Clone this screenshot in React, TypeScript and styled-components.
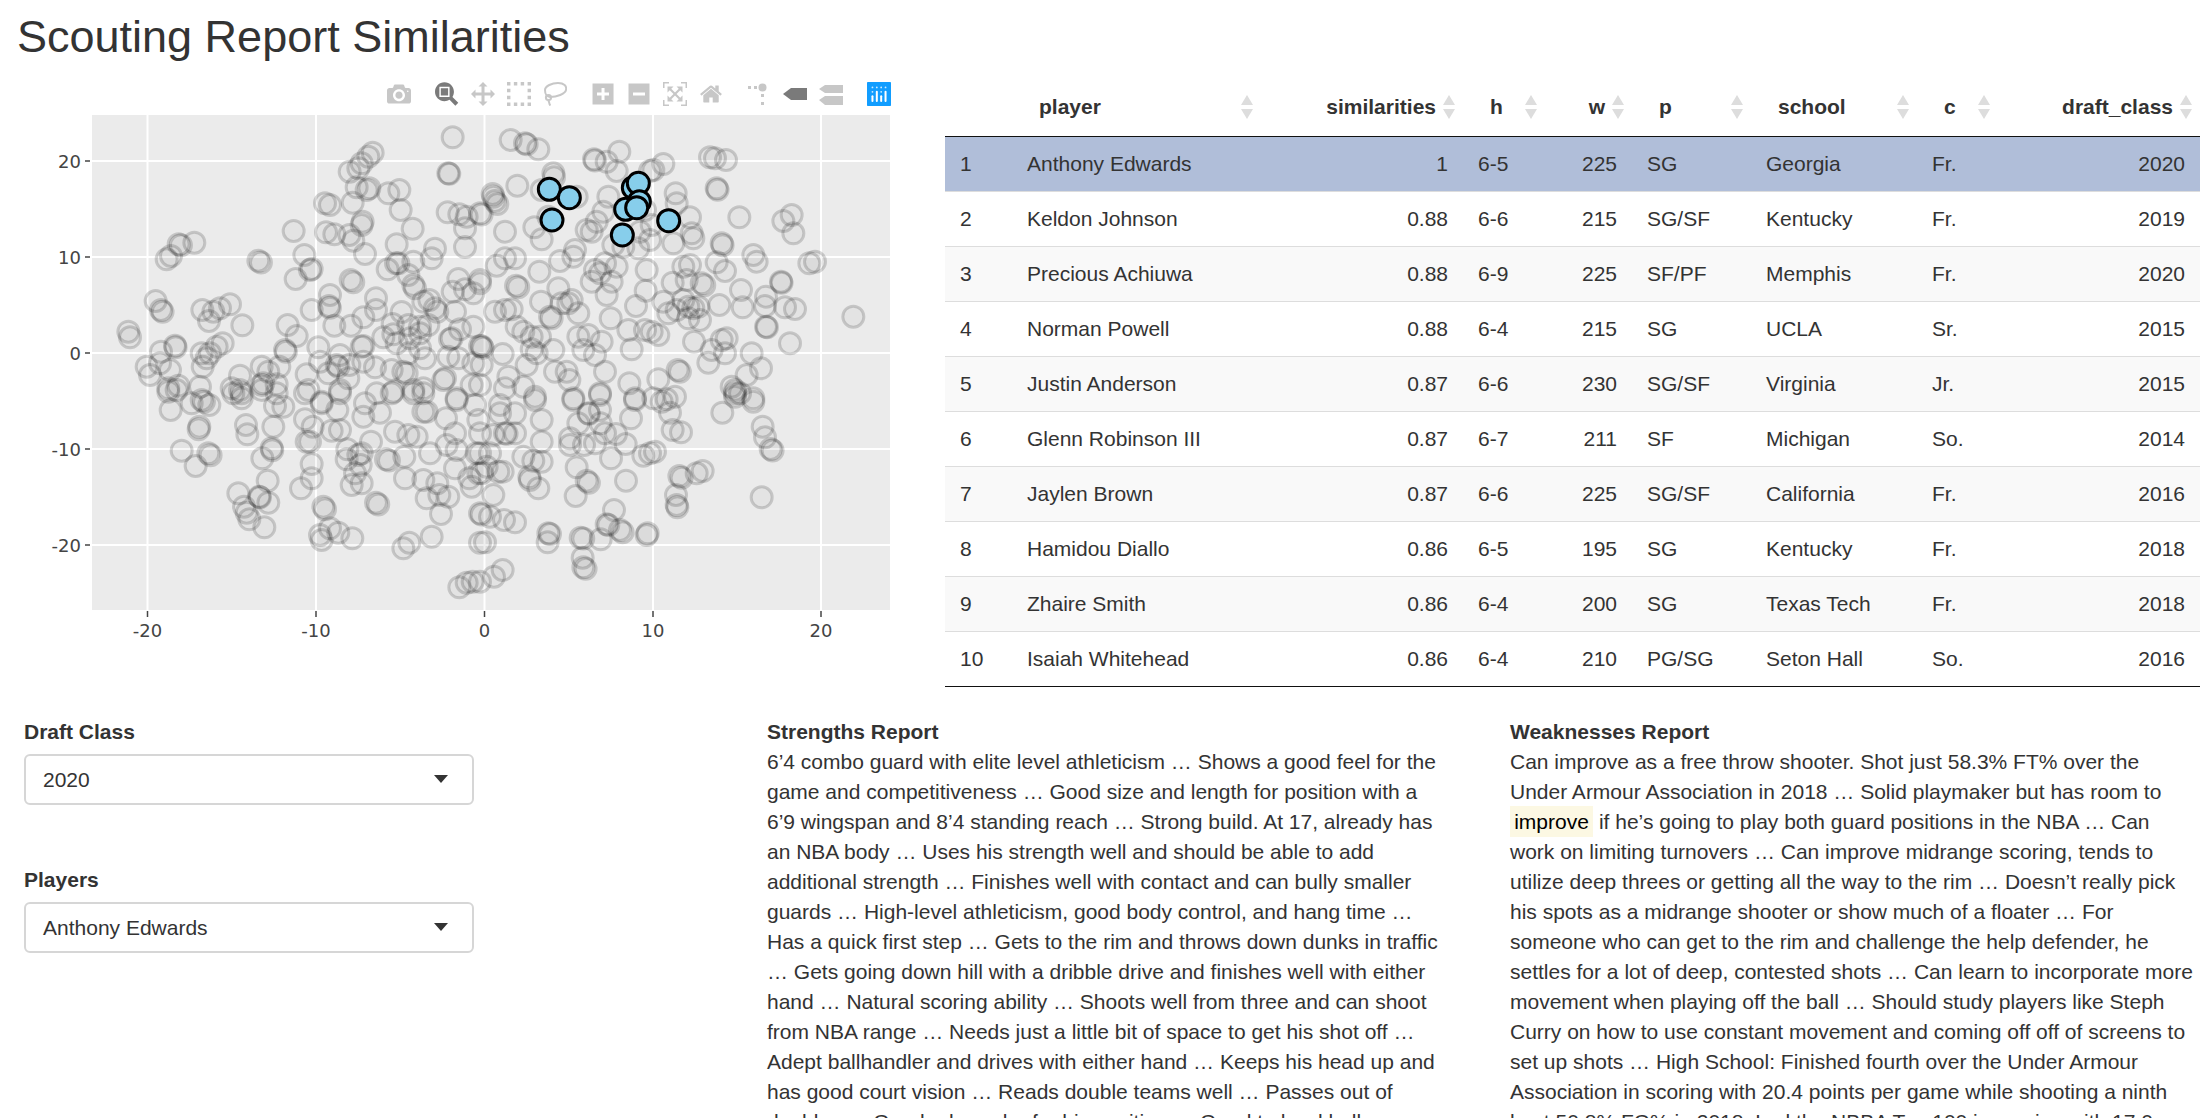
import styled, { createGlobalStyle } from "styled-components";

const GlobalStyle = createGlobalStyle`
  html, body {
    margin: 0;
    height: 100%;
    overflow: hidden;
    background: #fff;
  }
  body {
    font-family: "Liberation Sans", Arial, sans-serif;
    font-size: 21px;
    line-height: 30px;
    color: #333;
  }
`;

const Page = styled.div`
  width: 2200px;
  height: 1118px;
  overflow: hidden;
`;
const Title = styled.h2`
  margin: 0;
  height: 60px;
  padding: 12px 0 0 17px;
  box-sizing: border-box;
  font-size: 45px;
  line-height: 50px;
  font-weight: 500;
`;
const TopRow = styled.div`
  display: grid;
  grid-template-columns: 945px 1255px;
  height: 640px;
`;
const ChartPanel = styled.div`
  position: relative;
  height: 640px;
`;
const ModeBar = styled.div`
  position: absolute;
  top: 22px;
  right: 54px;
  display: flex;
  gap: 24px;
`;
const ModeGroup = styled.div`
  display: flex;
  gap: 12px;
`;
const ModeIcon = styled.svg`
  width: 24px;
  height: 24px;
  display: block;
`;
const TableWrap = styled.div`
  padding-top: 16px;
`;
const Table = styled.table`
  width: 1255px;
  table-layout: fixed;
  border-collapse: separate;
  border-spacing: 0;
  border-bottom: 1px solid #111;
  font-size: 21px;
  color: #333;
`;
const Th = styled.th<{ $right?: boolean }>`
  position: relative;
  padding: 16px 27px 14px;
  line-height: 30px;
  font-weight: 700;
  text-align: ${(p) => (p.$right ? "right" : "left")};
  border-bottom: 1px solid #111;
`;
const SortIcon = styled.svg`
  position: absolute;
  right: 8px;
  top: 19px;
  width: 12px;
  height: 24px;
`;
const Row = styled.tr<{ $selected?: boolean; $striped?: boolean }>`
  background: ${(p) => (p.$selected ? "#b0bed9" : p.$striped ? "#f9f9f9" : "#fff")};
  tr + & td {
    border-top: 1px solid #ddd;
  }
`;
const Td = styled.td<{ $right?: boolean }>`
  padding: 12px 15px;
  line-height: 30px;
  text-align: ${(p) => (p.$right ? "right" : "left")};
  white-space: nowrap;
`;
const BottomRow = styled.div`
  display: grid;
  grid-template-columns: 767px 743px 1fr;
  padding-top: 17px;
`;
const Filters = styled.div`
  padding-left: 24px;
  display: flex;
  flex-direction: column;
  gap: 60px;
`;
const Filter = styled.div`
  width: 450px;
`;
const FieldLabel = styled.div`
  font-weight: 700;
  margin-bottom: 7px;
`;
const SelectBox = styled.div`
  position: relative;
  box-sizing: border-box;
  height: 51px;
  padding: 9px 17px;
  border: 2px solid #d6d6d6;
  border-radius: 6px;
  &::after {
    content: "";
    position: absolute;
    right: 24px;
    top: 19px;
    border-style: solid;
    border-width: 8px 7px 0;
    border-color: #333 transparent transparent;
  }
`;
const Report = styled.div`
  width: 684px;
`;
const ReportTitle = styled.div`
  font-weight: 700;
  height: 30px;
`;
const Mark = styled.mark`
  padding: 0.2em;
  background: #fcf8e3;
`;

// pixel positions of the scatter, read off the reference at 3x
const crowdA = [
  385,695,390,712,467,603,483,630,483,632,500,478,513,468,536,433,538,432,583,428,775,482,778,484,881,393,913,465,887,537,930,510,935,507,975,310,990,315,1058,308,1049,215,1075,205,1085,190,1105,170,1118,158,1070,262,1100,270,1108,265,1165,280,1198,270,1202,330,1238,386,1343,337,1378,343,1400,350,1395,385,1395,441,1440,340,1088,365,1085,375,978,397,1003,403,1048,405,1060,422,1095,462,1190,433,1163,508,1188,490,1195,490,1305,446,1295,475,1240,485,1225,525,1240,555,1245,565,1052,540,1055,543,990,585,987,618,985,620,935,630,1003,677,1053,677,1128,595,1090,652,1128,630,1205,636,1178,672,1288,600,1270,605,1305,625,1312,635,1375,537,1358,575,1365,635,1395,568,1420,580,1440,540,1260,680,1285,675,1225,675,1150,712,1180,703,1190,730,1230,715,1260,700,1090,738,1085,740,1355,715,1350,718,1380,688,1420,680,1440,738,1443,740,863,675,890,708,855,750,853,752,955,742,727,676,690,613,660,625,640,635,607,630,627,663,668,730,650,740,605,760,630,760,620,775,608,800,525,737,522,738,483,755,480,790,440,800,450,825,510,810,505,865,535,857,600,860,785,800,805,815,838,800,920,823,960,785,1020,765,985,820,1010,795,1015,800,1048,795,1090,785,1125,802,1175,810,1210,815,1220,820,1225,760,1275,775,1260,745,1045,835,1020,870,785,855,790,850,830,853,720,827,695,865,720,870,725,880,925,870,965,905,1130,880,1180,875,1240,870,1270,865,1335,835,1330,840,1345,770,1375,775,1420,790,1415,855,1440,855,1370,895,1358,112,1345,220,1343,218,
];
const crowdB = [
  92,120,135,130,140,133,175,148,342,178,340,178,380,185,418,155,410,213,510,213,520,210,550,192,690,172,705,175,738,180,710,265,708,266,220,220,222,232,112,257,185,270,290,290,385,290,587,280,590,310,630,352,778,352,910,363,935,345,940,400,38,282,40,290,45,303,52,312,370,335,350,365,335,395,320,390,75,395,163,382,185,418,205,350,0,340,495,330,515,375,480,395,510,420,580,430,635,400,640,415,725,430,723,432,400,435,475,445,430,440,820,465,830,485,988,490,1005,485,903,545,900,545,710,487,735,513,610,500,630,495,500,510,285,450,280,470,240,483,105,475,75,475,50,497,178,515,0,550,108,557,110,558,345,510,375,490,410,500,335,545,360,520,395,545,380,585,235,565,183,605,665,550,668,552,620,540,578,548,497,572,783,570,858,590,855,618,915,622,945,627,788,622,718,615,655,620,625,620,640,625,610,600,565,640,590,630,550,605,468,618,275,600,265,610,295,640,245,610,210,650,215,655,95,628,45,635,75,630,392,655,445,690,495,690,515,695,535,705,642,725,660,660,625,655,858,680,856,678,930,730,1120,650,725,720,740,715,695,750,735,760,815,760,685,788,843,805,800,825,765,880,455,748,365,725,325,705,295,710,310,750,345,765,220,750,155,748,170,760,140,795,110,680,130,695,155,710,180,710,68,762,85,830,130,860,0,735,5,795,225,815,260,815,268,840,375,815,448,850,535,838,593,810,595,812,755,860,765,870,780,880,820,895,360,880,465,895,280,895,165,890,75,865,
];
const crowdC = [
  512,60,575,40,605,30,607,32,628,45,598,110,596,118,738,105,742,133,820,110,545,182,625,190,627,192,587,228,815,175,812,177,787,205,803,272,715,310,778,320,775,318,805,338,732,350,740,368,748,388,793,412,903,295,935,265,935,222,920,155,930,155,938,110,915,88,995,122,1020,120,1042,178,1040,208,1075,195,1085,190,1082,225,1065,250,1055,285,1085,280,1113,155,1158,208,1162,208,1213,200,1185,125,1225,135,1250,140,1290,190,1215,265,1270,270,1312,280,1318,315,1345,320,1280,325,1323,372,1128,338,1130,340,970,350,975,358,990,415,1015,428,1057,445,960,435,965,450,1210,475,1228,458,1295,440,1378,592,1400,578,1418,575,1440,370,1440,458,1338,85,1365,130,1340,165,1370,180,1365,235,1408,265,1415,290,1430,190,1435,250,1370,30,1280,65,1270,65,1140,68,1090,80,1095,40,965,40,1012,60,850,50,825,48,725,25,700,10,785,0,830,10,1020,10,1175,10,1240,10,1270,10,1425,45,1435,90,915,10,505,5,530,0,
];
const crowdD = [
  0,370,30,380,72,390,105,397,15,457,0,575,68,540,42,560,205,430,210,432,203,457,302,443,305,442,308,503,310,532,312,533,362,448,380,403,385,405,402,360,420,420,423,423,503,430,500,435,438,272,320,272,322,275,287,318,290,232,393,205,490,197,510,190,525,185,437,162,408,132,375,130,345,160,312,165,270,145,270,165,295,100,362,100,453,85,325,70,322,68,360,60,280,30,360,15,465,30,520,25,545,35,560,28,585,20,570,68,578,120,603,127,598,258,600,260,588,315,590,345,592,352,650,250,668,243,845,322,848,110,855,142,872,177,873,178,727,68,765,20,820,35,40,315,55,245,68,245,5,250,148,262,150,270,175,295,185,215,160,212,130,200,185,155,185,90,75,130,75,128,105,130,40,135,0,130,60,70,105,70,165,30,60,45,30,190,20,230,0,190,
];
const picked = [208,268,268,293,216,360,460,263,475,250,478,305,437,328,470,323,427,405,566,362];

const unpack = (list: number[], ox: number, oy: number) => {
  const out: [number, number][] = [];
  for (let i = 0; i < list.length; i += 2) {
    out.push([ox + list[i] / 3, oy + list[i + 1] / 3]);
  }
  return out;
};

// near-identical rings read as too dark, so pull them apart a little
const spread = (points: [number, number][]) =>
  points.map(([x, y], i): [number, number] => {
    const close = points.slice(0, i).some(([a, b]) => Math.abs(a - x) < 1.6 && Math.abs(b - y) < 1.6);
    return close ? [x + 1.6, y + 1.2] : [x, y];
  });

// svg sits 60px below the page top
const crowd = spread([
  ...unpack(crowdA, 0, 40),
  ...unpack(crowdB, 480, 40),
  ...unpack(crowdC, 0, 330),
  ...unpack(crowdD, 480, 330),
]);
const pickedDots = unpack(picked, 480, 40);

const xTicks = [
  { label: "-20", x: 147.5 },
  { label: "-10", x: 316 },
  { label: "0", x: 484.5 },
  { label: "10", x: 653 },
  { label: "20", x: 821 },
];
const yTicks = [
  { label: "20", y: 101 },
  { label: "10", y: 197 },
  { label: "0", y: 293 },
  { label: "-10", y: 389 },
  { label: "-20", y: 485 },
];

function Scatter() {
  return (
    <svg width="945" height="640" style={{ display: "block" }}>
      <rect x="92" y="55" width="798" height="495" fill="#ebebeb" />
      {xTicks.map((t) => (
        <g key={t.label}>
          <line x1={t.x} x2={t.x} y1="55" y2="550" stroke="#fff" strokeWidth="2" />
          <line x1={t.x} x2={t.x} y1="551" y2="557" stroke="#444" strokeWidth="1.5" />
          <text x={t.x} y="577" textAnchor="middle" fontFamily="DejaVu Sans, sans-serif" fontSize="18" fill="#444">
            {t.label}
          </text>
        </g>
      ))}
      {yTicks.map((t) => (
        <g key={t.label}>
          <line x1="92" x2="890" y1={t.y} y2={t.y} stroke="#fff" strokeWidth="2" />
          <line x1="85" x2="90" y1={t.y} y2={t.y} stroke="#444" strokeWidth="1.5" />
          <text x="81" y={t.y + 6.5} textAnchor="end" fontFamily="DejaVu Sans, sans-serif" fontSize="18" fill="#444">
            {t.label}
          </text>
        </g>
      ))}
      <g clipPath="url(#plot-area)">
        {crowd.map(([x, y], i) => (
          <circle key={i} cx={x} cy={y} r="10.5" fill="rgba(0,0,0,0.03)" stroke="rgba(0,0,0,0.16)" strokeWidth="3" />
        ))}
      </g>
      {pickedDots.map(([x, y], i) => (
        <circle key={i} cx={x} cy={y} r="11" fill="#87ceeb" stroke="#000" strokeWidth="3" />
      ))}
      <clipPath id="plot-area">
        <rect x="80" y="45" width="820" height="515" />
      </clipPath>
    </svg>
  );
}

const OFF = "#c7c7c7";
const ON = "#7a7a7a";

function PlotlyGlyph({ d, w = 1000, color = OFF }: { d: string; w?: number; color?: string }) {
  return (
    <ModeIcon viewBox={`0 0 ${w} 1000`}>
      <path d={d} transform="matrix(1 0 0 -1 0 850)" fill={color} />
    </ModeIcon>
  );
}

const cameraPath =
  "m500 450c-83 0-150-67-150-150 0-83 67-150 150-150 83 0 150 67 150 150 0 83-67 150-150 150z m400 150h-120c-16 0-34 13-39 29l-31 93c-6 15-23 28-40 28h-340c-16 0-34-13-39-28l-31-93c-6-16-23-29-39-29h-121c-55 0-100-45-100-100v-450c0-55 45-100 100-100h800c55 0 100 45 100 100v450c0 55-45 100-100 100z m-400-550c-138 0-250 112-250 250 0 138 112 250 250 250 138 0 250-112 250-250 0-138-112-250-250-250z m365 380c-19 0-35 16-35 35 0 19 16 35 35 35 19 0 35-16 35-35 0-19-16-35-35-35z";
const zoomPath =
  "m1000-25l-250 251c40 63 63 138 63 218 0 224-182 406-407 406-224 0-406-182-406-406s183-406 407-406c80 0 155 22 218 62l250-250 125 125z m-812 250l0 438 437 0 0-438-437 0z m62 375l313 0 0-312-313 0 0 312z";
const panPath =
  "m1000 350l-187 188 0-125-250 0 0 250 125 0-188 187-187-187 125 0 0-250-250 0 0 125-188-188 186-187 0 125 252 0 0-250-125 0 187-188 188 188-125 0 0 250 250 0 0-126 187 188z";
const selectPath =
  "m0 850l0-143 143 0 0 143-143 0z m286 0l0-143 143 0 0 143-143 0z m285 0l0-143 143 0 0 143-143 0z m286 0l0-143 143 0 0 143-143 0z m-857-286l0-143 143 0 0 143-143 0z m857 0l0-143 143 0 0 143-143 0z m-857-285l0-143 143 0 0 143-143 0z m857 0l0-143 143 0 0 143-143 0z m-857-286l0-143 143 0 0 143-143 0z m286 0l0-143 143 0 0 143-143 0z m285 0l0-143 143 0 0 143-143 0z m286 0l0-143 143 0 0 143-143 0z";
const plusPath =
  "m1 787l0-875 875 0 0 875-875 0z m687-500l-187 0 0-187-125 0 0 187-188 0 0 125 188 0 0 187 125 0 0-187 187 0 0-125z";
const minusPath = "m0 788l0-876 875 0 0 876-875 0z m688-500l-500 0 0 125 500 0 0-125z";
const autoscalePath =
  "m250 850l-187 0-63 0 0-62 0-188 63 0 0 188 187 0 0 62z m688 0l-188 0 0-62 188 0 0-188 62 0 0 188 0 62-62 0z m-875-938l0 188-63 0 0-188 0-62 63 0 187 0 0 62-187 0z m875 188l0-188-188 0 0-62 188 0 62 0 0 62 0 188-62 0z m-125 188l-1 0-93-94-156 156 156 156 92-93 2 0 0 250-250 0 0-2 93-92-156-156-156 156 94 92 0 2-250 0 0-250 0 0 93 93 157-156-157-156-93 94 0 0 0-250 250 0 0 0-94 93 156 157 156-157-93-93 0 0 250 0 0 250z";
const homePath =
  "m786 296v-267q0-15-11-26t-25-10h-214v214h-143v-214h-214q-15 0-25 10t-11 26v267q0 1 0 2t0 2l321 264 321-264q1-1 1-4z m124 39l-34-41q-5-5-12-6h-2q-7 0-12 3l-386 322-386-322q-7-4-13-4-7 2-12 7l-35 41q-4 5-3 13t6 12l401 334q18 15 42 15t43-15l136-114v109q0 8 5 13t13 5h107q8 0 13-5t5-13v-227l122-102q5-5 6-12t-4-13z";

function LassoIcon() {
  return (
    <ModeIcon viewBox="0 0 24 24" fill="none" stroke={OFF} strokeWidth="2">
      <path d="M2 8C2 4 9 1 15 1C21 1 24 4 23 8C22 12 14 15 7 15C4 15 2 12 2 8Z" />
      <circle cx="5.5" cy="15.5" r="2.6" />
      <path d="M5 18C7 20 5.5 22 7.5 23.5" />
    </ModeIcon>
  );
}
function SpikeIcon() {
  return (
    <ModeIcon viewBox="0 0 24 24" fill={OFF}>
      <rect x="1" y="4" width="3" height="3" />
      <rect x="7" y="4" width="3" height="3" />
      <circle cx="15.5" cy="5.5" r="4" />
      <rect x="14" y="12" width="3" height="3" />
      <rect x="14" y="20" width="3" height="3" />
    </ModeIcon>
  );
}
function ClosestIcon() {
  return (
    <ModeIcon viewBox="0 0 24 24" fill={ON}>
      <path d="M0 12L8 6H24V18H8Z" />
    </ModeIcon>
  );
}
function CompareIcon() {
  return (
    <ModeIcon viewBox="0 0 24 24" fill={OFF}>
      <path d="M0 7L6 3H24V11H6Z" />
      <path d="M0 18L6 14H24V23H6Z" />
    </ModeIcon>
  );
}
function PlotlyLogo() {
  const dots = [[30, 30], [54, 30], [78, 30], [102, 30], [30, 54], [78, 54]];
  const bars = [[30, 78], [54, 54], [78, 78], [102, 54]];
  return (
    <ModeIcon viewBox="0 0 132 132">
      <rect width="132" height="132" rx="4" fill="#119dff" />
      {dots.map(([x, y]) => (
        <circle key={`${x}-${y}`} cx={x} cy={y} r="5" fill="#fff" fillOpacity="0.8" />
      ))}
      {bars.map(([x, y]) => (
        <line key={x} x1={x} x2={x} y1={y} y2="104" stroke="#fff" strokeWidth="11" strokeLinecap="round" />
      ))}
    </ModeIcon>
  );
}

function SortArrows() {
  return (
    <SortIcon viewBox="0 0 12 24">
      <path d="M6 0L12 10H0Z" fill="#ddd" />
      <path d="M0 14H12L6 24Z" fill="#ddd" />
    </SortIcon>
  );
}

const columns = [
  { key: "rank", label: "", width: 67 },
  { key: "player", label: "player", width: 249 },
  { key: "similarities", label: "similarities", width: 202, right: true },
  { key: "h", label: "h", width: 82 },
  { key: "w", label: "w", width: 87, right: true },
  { key: "p", label: "p", width: 119 },
  { key: "school", label: "school", width: 166 },
  { key: "c", label: "c", width: 81 },
  { key: "draft_class", label: "draft_class", width: 202, right: true },
];

const rows = [
  ["1", "Anthony Edwards", "1", "6-5", "225", "SG", "Georgia", "Fr.", "2020"],
  ["2", "Keldon Johnson", "0.88", "6-6", "215", "SG/SF", "Kentucky", "Fr.", "2019"],
  ["3", "Precious Achiuwa", "0.88", "6-9", "225", "SF/PF", "Memphis", "Fr.", "2020"],
  ["4", "Norman Powell", "0.88", "6-4", "215", "SG", "UCLA", "Sr.", "2015"],
  ["5", "Justin Anderson", "0.87", "6-6", "230", "SG/SF", "Virginia", "Jr.", "2015"],
  ["6", "Glenn Robinson III", "0.87", "6-7", "211", "SF", "Michigan", "So.", "2014"],
  ["7", "Jaylen Brown", "0.87", "6-6", "225", "SG/SF", "California", "Fr.", "2016"],
  ["8", "Hamidou Diallo", "0.86", "6-5", "195", "SG", "Kentucky", "Fr.", "2018"],
  ["9", "Zhaire Smith", "0.86", "6-4", "200", "SG", "Texas Tech", "Fr.", "2018"],
  ["10", "Isaiah Whitehead", "0.86", "6-4", "210", "PG/SG", "Seton Hall", "So.", "2016"],
];

export default function App() {
  return (
    <Page>
      <GlobalStyle />
      <Title>Scouting Report Similarities</Title>
      <TopRow>
        <ChartPanel>
          <Scatter />
          <ModeBar>
            <ModeGroup>
              <PlotlyGlyph d={cameraPath} />
            </ModeGroup>
            <ModeGroup>
              <PlotlyGlyph d={zoomPath} w={1031} color={ON} />
              <PlotlyGlyph d={panPath} />
              <PlotlyGlyph d={selectPath} />
              <LassoIcon />
            </ModeGroup>
            <ModeGroup>
              <PlotlyGlyph d={plusPath} w={875} />
              <PlotlyGlyph d={minusPath} w={875} />
              <PlotlyGlyph d={autoscalePath} />
              <PlotlyGlyph d={homePath} w={928.6} />
            </ModeGroup>
            <ModeGroup>
              <SpikeIcon />
              <ClosestIcon />
              <CompareIcon />
            </ModeGroup>
            <ModeGroup>
              <PlotlyLogo />
            </ModeGroup>
          </ModeBar>
        </ChartPanel>
        <TableWrap>
          <Table>
            <colgroup>
              {columns.map((c) => (
                <col key={c.key} width={c.width} />
              ))}
            </colgroup>
            <thead>
              <tr>
                {columns.map((c) => (
                  <Th key={c.key} $right={c.right}>
                    {c.label}
                    {c.label && <SortArrows />}
                  </Th>
                ))}
              </tr>
            </thead>
            <tbody>
              {rows.map((row, i) => (
                <Row key={row[0]} $selected={i === 0} $striped={i % 2 === 0}>
                  {row.map((cell, j) => (
                    <Td key={columns[j].key} $right={columns[j].right}>
                      {cell}
                    </Td>
                  ))}
                </Row>
              ))}
            </tbody>
          </Table>
        </TableWrap>
      </TopRow>
      <BottomRow>
        <Filters>
          <Filter>
            <FieldLabel>Draft Class</FieldLabel>
            <SelectBox>2020</SelectBox>
          </Filter>
          <Filter>
            <FieldLabel>Players</FieldLabel>
            <SelectBox>Anthony Edwards</SelectBox>
          </Filter>
        </Filters>
        <Report>
          <ReportTitle>Strengths Report</ReportTitle>
          6’4 combo guard with elite level athleticism … Shows a good feel for the game and competitiveness … Good size
          and length for position with a 6’9 wingspan and 8’4 standing reach … Strong build. At 17, already has an NBA
          body … Uses his strength well and should be able to add additional strength … Finishes well with contact and
          can bully smaller guards … High-level athleticism, good body control, and hang time … Has a quick first step …
          Gets to the rim and throws down dunks in traffic … Gets going down hill with a dribble drive and finishes well
          with either hand … Natural scoring ability … Shoots well from three and can shoot from NBA range … Needs just a
          little bit of space to get his shot off … Adept ballhandler and drives with either hand … Keeps his head up and
          has good court vision … Reads double teams well … Passes out of doubles … Good rebounder for his position …
          Good to hard ball athleticism
        </Report>
        <Report>
          <ReportTitle>Weaknesses Report</ReportTitle>
          Can improve as a free throw shooter. Shot just 58.3% FT% over the Under Armour Association in 2018 … Solid
          playmaker but has room to <Mark>improve</Mark> if he’s going to play both guard positions in the NBA … Can work
          on limiting turnovers … Can improve midrange scoring, tends to utilize deep threes or getting all the way to the
          rim … Doesn’t really pick his spots as a midrange shooter or show much of a floater … For someone who can get to
          the rim and challenge the help defender, he settles for a lot of deep, contested shots … Can learn to incorporate
          more movement when playing off the ball … Should study players like Steph Curry on how to use constant movement
          and coming off off of screens to set up shots … High School: Finished fourth over the Under Armour Association in
          scoring with 20.4 points per game while shooting a ninth best 50.8% FG% in 2018. Led the NBBA Top 100 in scoring
          with 17.0
        </Report>
      </BottomRow>
    </Page>
  );
}
